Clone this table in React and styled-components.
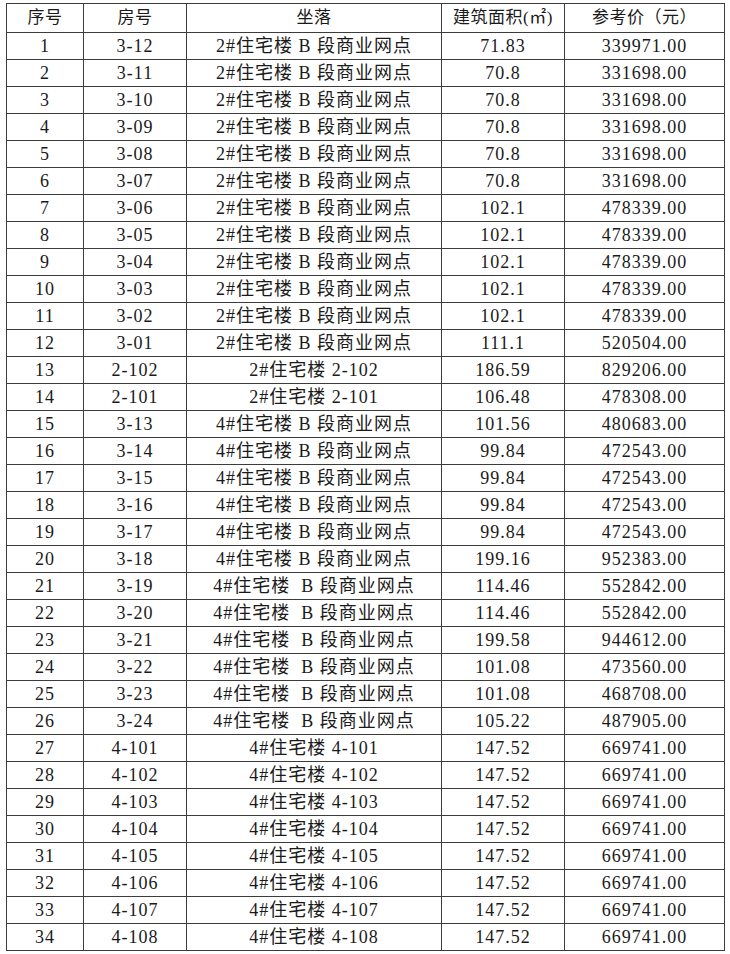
import React from "react";
import styled, { createGlobalStyle } from "styled-components";

const Global = createGlobalStyle`
  html, body { margin: 0; padding: 0; background: #ffffff; }
  body { font-family: "Liberation Serif", "Noto Sans CJK SC", serif; color: #141414; }
`;

const Page = styled.div`
  padding: 3px 6px 0 6px;
`;

const Table = styled.table`
  border-collapse: collapse;
  table-layout: fixed;
  width: 718px;
  font-family: "Liberation Serif", "Noto Sans CJK SC", serif;
  font-size: 18px;
  letter-spacing: 1px;
  color: #1a1a1a;
`;

const HeadRow = styled.tr`
  height: 29px;
`;

const Row = styled.tr`
  height: 27px;
`;

const HeadCell = styled.th`
  border: 1px solid #3c3c3c;
  font-weight: 400;
  font-size: 17px;
  letter-spacing: 0.5px;
  text-align: center;
  padding: 0;
  white-space: pre;
  line-height: 20px;
`;

const Cell = styled.td`
  border: 1px solid #3c3c3c;
  text-align: center;
  padding: 0;
  white-space: pre;
  line-height: 20px;
`;

const widths = [77, 103, 255, 123, 160];
const heads = ["序号", "房号", "坐落", "建筑面积(㎡)", "参考价（元）"];

const B2 = "2#住宅楼 B 段商业网点";
const B4 = "4#住宅楼 B 段商业网点";
const B4s = "4#住宅楼  B 段商业网点";

const rows = [
  ["3-12", B2, "71.83", "339971.00"],
  ["3-11", B2, "70.8", "331698.00"],
  ["3-10", B2, "70.8", "331698.00"],
  ["3-09", B2, "70.8", "331698.00"],
  ["3-08", B2, "70.8", "331698.00"],
  ["3-07", B2, "70.8", "331698.00"],
  ["3-06", B2, "102.1", "478339.00"],
  ["3-05", B2, "102.1", "478339.00"],
  ["3-04", B2, "102.1", "478339.00"],
  ["3-03", B2, "102.1", "478339.00"],
  ["3-02", B2, "102.1", "478339.00"],
  ["3-01", B2, "111.1", "520504.00"],
  ["2-102", "2#住宅楼 2-102", "186.59", "829206.00"],
  ["2-101", "2#住宅楼 2-101", "106.48", "478308.00"],
  ["3-13", B4, "101.56", "480683.00"],
  ["3-14", B4, "99.84", "472543.00"],
  ["3-15", B4, "99.84", "472543.00"],
  ["3-16", B4, "99.84", "472543.00"],
  ["3-17", B4, "99.84", "472543.00"],
  ["3-18", B4, "199.16", "952383.00"],
  ["3-19", B4s, "114.46", "552842.00"],
  ["3-20", B4s, "114.46", "552842.00"],
  ["3-21", B4s, "199.58", "944612.00"],
  ["3-22", B4s, "101.08", "473560.00"],
  ["3-23", B4s, "101.08", "468708.00"],
  ["3-24", B4s, "105.22", "487905.00"],
  ["4-101", "4#住宅楼 4-101", "147.52", "669741.00"],
  ["4-102", "4#住宅楼 4-102", "147.52", "669741.00"],
  ["4-103", "4#住宅楼 4-103", "147.52", "669741.00"],
  ["4-104", "4#住宅楼 4-104", "147.52", "669741.00"],
  ["4-105", "4#住宅楼 4-105", "147.52", "669741.00"],
  ["4-106", "4#住宅楼 4-106", "147.52", "669741.00"],
  ["4-107", "4#住宅楼 4-107", "147.52", "669741.00"],
  ["4-108", "4#住宅楼 4-108", "147.52", "669741.00"],
];

export default function App() {
  return (
    <Page>
      <Global />
      <Table>
        <colgroup>
          {widths.map((w, i) => (
            <col key={i} style={{ width: w }} />
          ))}
        </colgroup>
        <thead>
          <HeadRow>
            {heads.map((h) => (
              <HeadCell key={h}>{h}</HeadCell>
            ))}
          </HeadRow>
        </thead>
        <tbody>
          {rows.map((r, i) => (
            <Row key={i}>
              <Cell>{i + 1}</Cell>
              <Cell>{r[0]}</Cell>
              <Cell>{r[1]}</Cell>
              <Cell>{r[2]}</Cell>
              <Cell>{r[3]}</Cell>
            </Row>
          ))}
        </tbody>
      </Table>
    </Page>
  );
}
